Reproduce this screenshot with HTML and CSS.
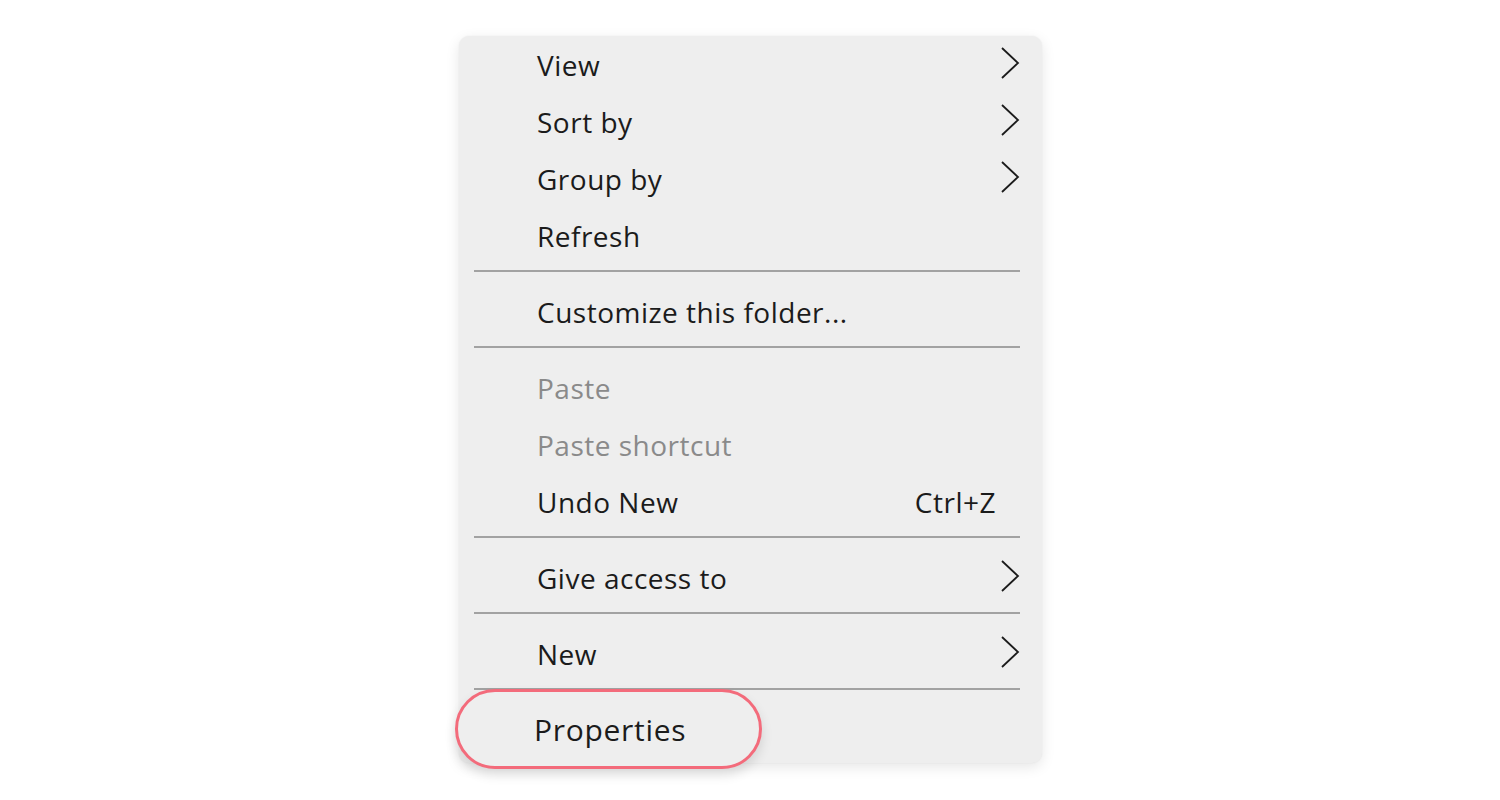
FILE: index.html
```html
<!DOCTYPE html>
<html lang="en">
<head>
<meta charset="utf-8">
<title>Context menu</title>
<link rel="stylesheet" href="styles.css">
</head>
<body>
<div class="menu">
  <div class="item"><span>View</span><svg class="chev" viewBox="0 0 20 34"><polyline points="2,2 18,17 2,32"/></svg></div>
  <div class="item"><span>Sort by</span><svg class="chev" viewBox="0 0 20 34"><polyline points="2,2 18,17 2,32"/></svg></div>
  <div class="item"><span>Group by</span><svg class="chev" viewBox="0 0 20 34"><polyline points="2,2 18,17 2,32"/></svg></div>
  <div class="item"><span>Refresh</span></div>
  <div class="sep"></div>
  <div class="item"><span>Customize this folder...</span></div>
  <div class="sep"></div>
  <div class="item disabled"><span>Paste</span></div>
  <div class="item disabled"><span>Paste shortcut</span></div>
  <div class="item"><span>Undo New</span><span class="shortcut">Ctrl+Z</span></div>
  <div class="sep"></div>
  <div class="item"><span>Give access to</span><svg class="chev" viewBox="0 0 20 34"><polyline points="2,2 18,17 2,32"/></svg></div>
  <div class="sep"></div>
  <div class="item"><span>New</span><svg class="chev" viewBox="0 0 20 34"><polyline points="2,2 18,17 2,32"/></svg></div>
  <div class="sep"></div>
  <div class="item prop-row">
    <div class="pill"><span>Properties</span></div>
  </div>
</div>
</body>
</html>
```

FILE: styles.css
```css
html, body {
  margin: 0;
  padding: 0;
  background: #ffffff;
}

body {
  min-height: 800px;
  padding-top: 36px;
  box-sizing: border-box;
  font-family: "Open Sans", "Noto Sans", sans-serif;
  color: #1b1b1b;
}

.menu {
  margin: 0 0 0 459px;
  width: 583px;
  height: 727px;
  box-sizing: border-box;
  padding-bottom: 5px;
  background: #eeeeee;
  border-radius: 10px;
  box-shadow: 0 4px 14px rgba(0, 0, 0, 0.10), 0 0 2px rgba(0, 0, 0, 0.06);
  display: flex;
  flex-direction: column;
}

.item {
  height: 57px;
  flex: none;
  display: flex;
  align-items: center;
  justify-content: space-between;
  padding: 0 22px 0 78px;
  font-size: 28px;
  letter-spacing: 0.5px;
  position: relative;
}

.item.disabled {
  color: #8a8a8a;
}

.shortcut {
  margin-right: 24px;
}

.chev {
  width: 20px;
  height: 34px;
  margin-top: -4px;
}

.chev polyline {
  fill: none;
  stroke: #1b1b1b;
  stroke-width: 1.8;
}

.sep {
  flex: none;
  height: 2px;
  margin: 6px 22px 11px 15px;
  background: #a2a2a2;
}

.prop-row {
  padding: 0;
}

.pill {
  position: absolute;
  left: -4px;
  top: -12px;
  width: 307px;
  height: 80px;
  box-sizing: border-box;
  border: 3px solid #f36b7b;
  border-radius: 40px;
  background: #eeeeee;
  box-shadow: 0 6px 12px rgba(0, 0, 0, 0.12);
  display: flex;
  align-items: center;
  padding-left: 76px;
  font-size: 30px;
  letter-spacing: 0.7px;
}
```
